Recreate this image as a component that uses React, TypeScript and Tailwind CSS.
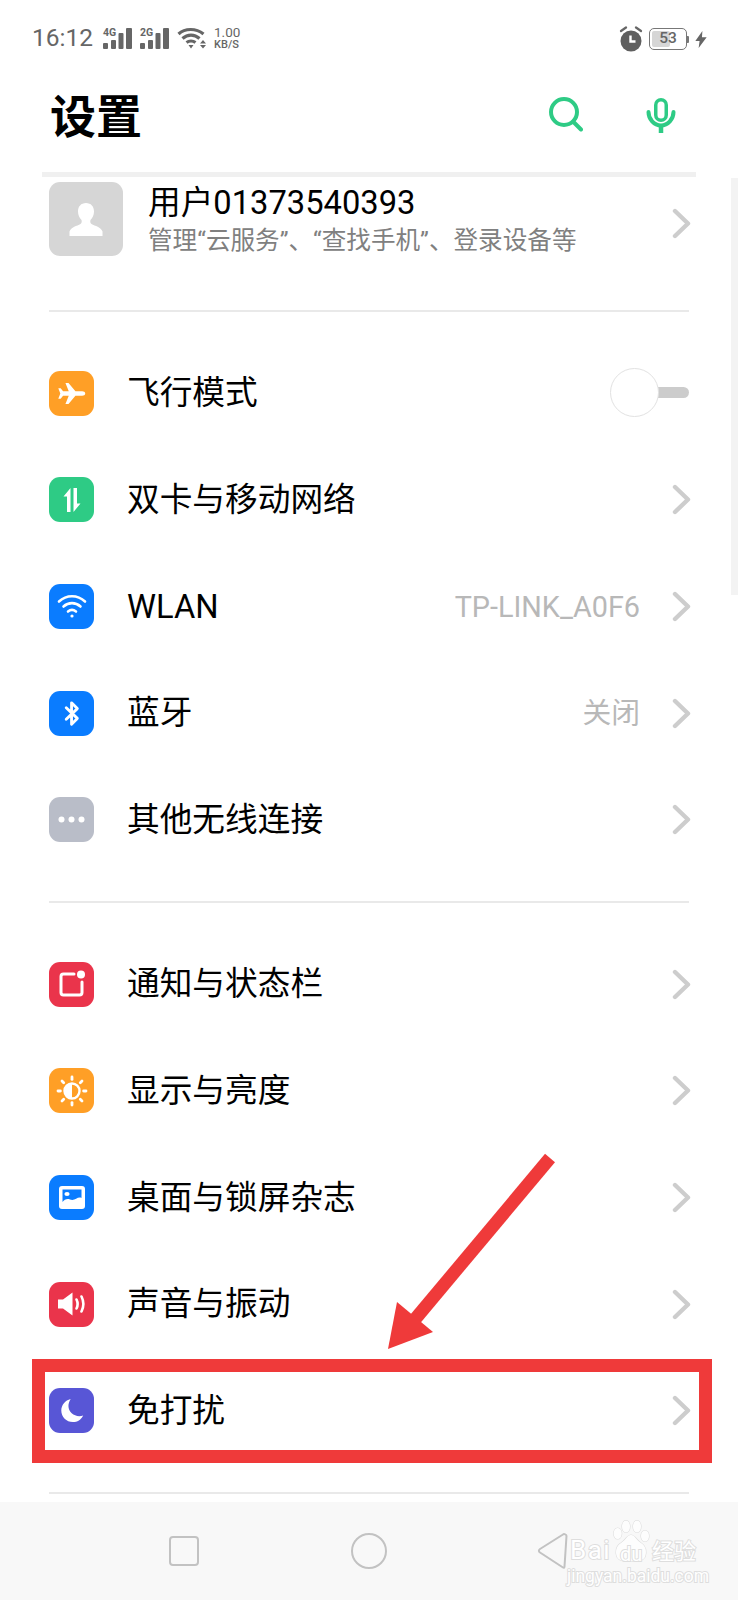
import { ReactNode } from "react";

const Chevron = () => (
  <svg width="19" height="31" viewBox="0 0 19 31" fill="none" className="shrink-0 -mr-[2px]">
    <path d="M3 3L16 15.5L3 28" stroke="#cdcdcd" strokeWidth="4.4" strokeLinecap="round" strokeLinejoin="round" />
  </svg>
);

const Signal = ({ label }: { label: string }) => (
  <div className="relative w-[29px] h-[21px]">
    <svg width="29" height="21" viewBox="0 0 29 21" fill="#666" className="absolute left-0 top-0">
      <rect x="0" y="15" width="5" height="6" rx="1" />
      <rect x="8" y="12" width="5" height="9" rx="1" />
      <rect x="15.500" y="5" width="5" height="16" rx="1" />
      <rect x="23" y="0" width="6" height="21" rx="1" />
    </svg>
    <span className="absolute left-0 -top-[1px] text-[10.500px] leading-[11px] font-bold text-[#666]">{label}</span>
  </div>
);

const IconTile = ({ bg, children }: { bg: string; children: ReactNode }) => (
  <div className={`w-[45px] h-[45px] rounded-[11px] flex items-center justify-center shrink-0 ${bg}`}>{children}</div>
);

const PlaneIcon = () => (
  <svg width="33" height="33" viewBox="0 0 36 36" fill="#fff">
    <path d="M33 18c0-1.600-1.600-2.400-3.400-2.400h-7.300L14.700 6.500h-3.300l3.600 9.100H8.800L6.200 12.400H3.600l2.200 5.600-2.200 5.600h2.600l2.600-3.200h6.200l-3.600 9.100h3.300l7.600-9.100h7.300C31.400 20.400 33 19.600 33 18z" />
  </svg>
);

const SwapIcon = () => (
  <svg width="20" height="24" viewBox="0 0 20 24" fill="#fff">
    <path d="M8.500 0L1.500 8.500H5V24H8.500z" />
    <path d="M11.500 24L18.500 15.500H15V0H11.500z" />
  </svg>
);

const WifiIcon = () => (
  <svg width="30" height="26" viewBox="0 0 30 26" fill="none" stroke="#fff" strokeWidth="2.6" strokeLinecap="round">
    <path d="M2 8.500C9.500 1.500 20.500 1.500 28 8.500" />
    <path d="M6.500 13.500C11.500 9 18.500 9 23.500 13.500" />
    <path d="M11 18.500C13.500 16.500 16.500 16.500 19 18.500" />
    <circle cx="15" cy="23" r="1.600" fill="#fff" stroke="none" />
  </svg>
);

const BluetoothIcon = () => (
  <svg width="16" height="27" viewBox="0 0 18 30" fill="none" stroke="#fff" strokeWidth="3.200" strokeLinejoin="round" strokeLinecap="round">
    <path d="M2.500 8.500L15 20.500L8.500 27V3L15 9.500L2.500 21.500" />
  </svg>
);

const DotsIcon = () => (
  <svg width="27" height="7" viewBox="0 0 27 7" fill="#fff">
    <circle cx="3.500" cy="3.500" r="3" />
    <circle cx="13.500" cy="3.500" r="3" />
    <circle cx="23.500" cy="3.500" r="3" />
  </svg>
);

const NotifyIcon = () => (
  <svg width="28" height="28" viewBox="0 0 28 28" fill="none">
    <path d="M16 4H5.500C4.100 4 3 5.100 3 6.500V22.500C3 23.900 4.100 25 5.500 25H21.500C22.900 25 24 23.900 24 22.500V12" stroke="#fff" strokeWidth="3" strokeLinecap="round" />
    <circle cx="23" cy="4.500" r="4" fill="#fff" />
  </svg>
);

const SunIcon = () => (
  <svg width="32" height="32" viewBox="0 0 32 32" fill="none">
    <circle cx="16" cy="16" r="7.500" stroke="#fff" strokeWidth="2.400" />
    <path d="M16 8.500a7.500 7.500 0 0 0 0 15z" fill="#fff" />
    <g stroke="#fff" strokeWidth="2.800" strokeLinecap="round">
      <path d="M16 2v2.400" />
      <path d="M16 27.600V30" />
      <path d="M2 16h2.400" />
      <path d="M27.600 16H30" />
      <path d="M6 6l1.700 1.700" />
      <path d="M24.300 24.300L26 26" />
      <path d="M6 26l1.700-1.700" />
      <path d="M24.300 7.700L26 6" />
    </g>
  </svg>
);

const WallpaperIcon = () => (
  <svg width="28" height="25" viewBox="0 0 28 25" fill="none">
    <rect x="1" y="1" width="26" height="23" rx="3" fill="#fff" />
    <path d="M4.500 4.500H23.500V13C19.500 11 17 16.500 12 14.500C9 13.300 6.500 14.500 4.500 17z" fill="#0a7cff" />
    <ellipse cx="9" cy="9" rx="2.600" ry="2" fill="#fff" />
  </svg>
);

const SoundIcon = () => (
  <svg width="29" height="26" viewBox="0 0 29 26" fill="none">
    <path d="M1 8.500H6L15.500 1.500V24.500L6 17.500H1z" fill="#fff" />
    <path d="M19.500 8.500C21 11.500 21 14.500 19.500 17.500" stroke="#fff" strokeWidth="2.600" strokeLinecap="round" />
    <path d="M24.500 5.500C27 10.500 27 15.500 24.500 20.500" stroke="#fff" strokeWidth="2.600" strokeLinecap="round" />
  </svg>
);

const MoonIcon = () => (
  <svg width="24" height="25" viewBox="0 0 26 28" fill="#fff">
    <path d="M11.500 1C5.500 2.500 1 7.800 1 14c0 7 5.700 13 13 13 4.900 0 9.300-2.800 11.500-7.500-1.300.5-2.800.8-4.300.8C14.800 20.300 9 15.300 9 9c0-2.800.9-5.500 2.500-8z" />
  </svg>
);

type Row = { bg: string; icon: ReactNode; label: string; value?: string; toggle?: boolean };

const networkRows: Row[] = [
  { bg: "bg-[#ff9f26]", icon: <PlaneIcon />, label: "飞行模式", toggle: true },
  { bg: "bg-[#2ecb85]", icon: <SwapIcon />, label: "双卡与移动网络" },
  { bg: "bg-[#0a7cff]", icon: <WifiIcon />, label: "WLAN", value: "TP-LINK_A0F6" },
  { bg: "bg-[#0a7cff]", icon: <BluetoothIcon />, label: "蓝牙", value: "关闭" },
  { bg: "bg-[#b9bdc8]", icon: <DotsIcon />, label: "其他无线连接" },
];

const systemRows: Row[] = [
  { bg: "bg-[#ea344b]", icon: <NotifyIcon />, label: "通知与状态栏" },
  { bg: "bg-[#ff9f26]", icon: <SunIcon />, label: "显示与亮度" },
  { bg: "bg-[#0a7cff]", icon: <WallpaperIcon />, label: "桌面与锁屏杂志" },
  { bg: "bg-[#ea344b]", icon: <SoundIcon />, label: "声音与振动" },
  { bg: "bg-[#5856d6]", icon: <MoonIcon />, label: "免打扰" },
];

const SettingRow = ({ row }: { row: Row }) => (
  <div className="h-[106.6px] flex items-center">
    <IconTile bg={row.bg}>{row.icon}</IconTile>
    <span className="ml-[33px] pt-[1px] flex-1 text-[32.700px] leading-none text-black">{row.label}</span>
    {row.value && <span className="mr-[32px] pt-[1px] text-[28.800px] leading-none text-[#b8b8b8]">{row.value}</span>}
    {row.toggle ? (
      <div className="relative w-[79px] h-[49px] -mt-[1px]">
        <div className="absolute right-0 top-[19px] w-[40px] h-[11px] rounded-full bg-[#cccccc]" />
        <div className="absolute left-0 top-0 w-[49px] h-[49px] rounded-full bg-white border border-[#e2e2e2]" />
      </div>
    ) : (
      <Chevron />
    )}
  </div>
);

const Divider = () => <div className="h-[2px] bg-[#e9e9e9]" />;

export default function App() {
  return (
    <div
      className="relative w-[738px] h-[1600px] overflow-hidden bg-white flex flex-col"
      style={{ fontFamily: 'Roboto, "Noto Sans CJK SC", sans-serif' }}
    >
      {/* status bar */}
      <div className="h-[72px] pl-[32px] pr-[31px] flex items-start justify-between pt-[26px]">
        <div className="flex items-center gap-[8px] text-[#666]">
          <span className="mr-[2px] text-[24.500px] leading-[24px]">16:12</span>
          <Signal label="4G" />
          <Signal label="2G" />
          <svg width="30" height="22" viewBox="0 0 30 22" fill="none" stroke="#666" strokeWidth="3.200">
            <path d="M1.500 7C8 1 19 1 26.500 7" />
            <path d="M5.500 11.500C10.500 7 17.500 7 22.500 11.500" />
            <path d="M9.500 15.500C12 13.700 16 13.700 18.500 15.500" />
            <path d="M11.500 18h5l-2.500 3.500z" fill="#666" stroke="none" />
            <path d="M23 16.500h6l-3-3.500zM23 18h6l-3 3.500z" fill="#666" stroke="none" />
          </svg>
          <div className="flex flex-col items-start -ml-[1px] -mt-[1px]">
            <span className="text-[13.500px] leading-[13px]">1.00</span>
            <span className="text-[11px] leading-[11px] font-medium">KB/S</span>
          </div>
        </div>
        <div className="flex items-center">
          <svg width="26" height="26" viewBox="0 0 26 26" fill="none">
            <circle cx="13" cy="15" r="10.500" fill="#5f5f5f" />
            <path d="M3 5l5-3.500M23 5l-5-3.500" stroke="#666" strokeWidth="2.200" strokeLinecap="round" />
            <path d="M12.500 9.500v6h5" stroke="#fff" strokeWidth="2.400" />
          </svg>
          <div className="ml-[5px] relative w-[38px] h-[22px] rounded-[5px] border-[1.500px] border-[#777] overflow-hidden flex items-center justify-center">
            <div className="absolute left-[2px] top-[2px] bottom-[2px] w-[18px] rounded-[2px] bg-[#d6d6d6]" />
            <span className="relative text-[15.500px] leading-none font-medium text-[#666]">53</span>
          </div>
          <div className="w-[2px] h-[7px] rounded-r-[1px] bg-[#777]" />
          <svg width="12" height="17" viewBox="0 0 12 18" fill="#666" className="ml-[6px]">
            <path d="M7.500 0L0 10.500h4.500L3.500 18 12 6.500H7z" />
          </svg>
        </div>
      </div>

      {/* title */}
      <div className="h-[100px] pl-[50px] flex items-start justify-between">
        <h1 className="mt-[12px] text-[46px] leading-[66px] font-bold text-black">设置</h1>
        <div className="flex items-start mt-[25px] mr-[62px] gap-[64px]">
          <svg width="34" height="35" viewBox="0 0 34 35" fill="none" stroke="#2ecb85" strokeWidth="4" strokeLinecap="round" className="translate-x-[1px]">
            <circle cx="15" cy="15" r="13" />
            <path d="M24.500 25L32 32.500" />
          </svg>
          <svg width="30" height="37" viewBox="0 0 30 37" fill="none">
            <rect x="8" y="1" width="14" height="24" rx="7" fill="#2ecb85" />
            <rect x="11.500" y="4.500" width="7" height="17" rx="3.500" fill="#fff" />
            <path d="M2.500 15c0 7 5.500 13.500 12.500 13.500S27.500 22 27.500 15" stroke="#2ecb85" strokeWidth="4" strokeLinecap="round" />
            <path d="M15 28v8" stroke="#2ecb85" strokeWidth="4.500" />
          </svg>
        </div>
      </div>

      <div className="mx-[42px] h-[5px] bg-[#f0f0f0]" />

      {/* settings list */}
      <div className="flex-1 px-[49px]">
        <div className="pt-[5px] h-[133px] flex items-start">
          <div className="w-[74px] h-[74px] rounded-[11px] bg-[#d6d6d6] flex items-center justify-center shrink-0">
            <svg width="34" height="33" viewBox="0 0 34 33" fill="#fff">
              <path d="M17 0c-5 0-8 3.500-8 8.500 0 3.500 1.400 6.500 3.500 8.500.5 1.500.2 3-1 4C8 23 2 24 .5 28.500V33h33v-4.500C32 24 26 23 22.500 21c-1.200-1-1.500-2.500-1-4 2.100-2 3.500-5 3.500-8.500C25 3.500 22 0 17 0z" />
            </svg>
          </div>
          <div className="ml-[25px] flex-1 pt-[1px]">
            <div className="text-[32.700px] leading-[41px] text-black">用户01373540393</div>
            <div className="mt-[2px] text-[24.600px] leading-[30px] text-[#808080] whitespace-nowrap">管理“云服务”、“查找手机”、登录设备等</div>
          </div>
          <div className="mt-[26px]">
            <Chevron />
          </div>
        </div>
        <Divider />
        <div className="py-[28px]">
          {networkRows.map((row) => (
            <SettingRow key={row.label} row={row} />
          ))}
        </div>
        <Divider />
        <div className="py-[28px]">
          {systemRows.map((row) => (
            <SettingRow key={row.label} row={row} />
          ))}
        </div>
        <Divider />
      </div>

      {/* nav bar */}
      <div className="h-[98px] bg-[#f8f8f8] relative">
        <div className="absolute left-[169px] top-[34px] w-[30px] h-[30px] rounded-[4px] border-2 border-[#c2c2c2]" />
        <div className="absolute left-[351px] top-[31px] w-[36px] h-[36px] rounded-full border-2 border-[#c2c2c2]" />
        <svg width="32" height="38" viewBox="0 0 32 38" fill="none" className="absolute left-[537px] top-[30px]">
          <path d="M26 2.500L3 17c-1.500 1-1.500 2.500 0 3.500L26 35.500c1 .6 1.500 0 1.500-1L29.500 4c0-1.500-2.500-2.500-3.500-1.500z" stroke="#c2c2c2" strokeWidth="2" strokeLinejoin="round" />
        </svg>
      </div>

      {/* scroll indicator */}
      <div className="absolute right-0 top-[178px] w-[7px] h-[417px] bg-[#f3f3f3]" />

      {/* red annotation */}
      <div className="absolute left-[32px] top-[1359px] w-[680px] h-[104px] border-[13px] border-[#ef3a3a]" />
      <svg width="200" height="220" viewBox="0 0 200 220" className="absolute left-[370px] top-[1140px]">
        <path d="M180 18L36 190" stroke="#ef3a3a" strokeWidth="13" />
        <path d="M27 162L18 209L63 192z" fill="#ef3a3a" />
      </svg>

      {/* watermark */}
      <div className="absolute left-[566px] top-[1520px] w-[134px] h-[66px] text-white [paint-order:stroke_fill] [-webkit-text-stroke:2px_#dedede]">
        <svg width="38" height="42" viewBox="0 0 38 42" fill="#fdfdfd" stroke="#dedede" strokeWidth="1.200" className="absolute left-[46px] top-0">
          <ellipse cx="5.700" cy="13.500" rx="4" ry="5.500" />
          <ellipse cx="14" cy="6.500" rx="4" ry="6" />
          <ellipse cx="25" cy="6.500" rx="4" ry="6" />
          <ellipse cx="33" cy="16" rx="4" ry="5.500" />
          <path d="M19 15c-4 0-5 5-10 8-5 3-6 9-4 14 3 5 9 4 14 4s11 1 14-4c2-5 1-11-4-14-5-3-6-8-10-8z" />
        </svg>
        <span className="absolute left-[4px] top-[16px] text-[26px] leading-[28px] tracking-[1.500px]">Bai</span>
        <span className="absolute left-[54px] top-[23px] text-[20px] leading-[22px]">du</span>
        <span className="absolute left-[86px] top-[21px] text-[22px] leading-[22px] whitespace-nowrap">经验</span>
        <span className="absolute left-[1px] top-[47px] text-[17.500px] leading-[18px] whitespace-nowrap">jingyan.baidu.com</span>
      </div>
    </div>
  );
}
